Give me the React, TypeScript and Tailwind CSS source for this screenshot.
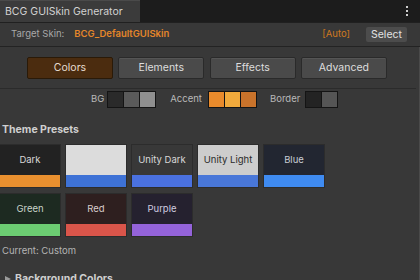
import { ReactNode } from 'react'

type Preset = { name: string; top: string; bar: string; text: string }

const presets: Preset[][] = [
  [
    { name: 'Dark', top: 'bg-[#222222]', bar: 'bg-[#e9902f]', text: 'text-[#d8d8d8]' },
    { name: '', top: 'bg-[#dcdcdc]', bar: 'bg-[#3e72d6]', text: 'text-[#222]' },
    { name: 'Unity Dark', top: 'bg-[#383838]', bar: 'bg-[#4a71e0]', text: 'text-[#d8d8d8]' },
    { name: 'Unity Light', top: 'bg-[#cdcdcd]', bar: 'bg-[#4977d8]', text: 'text-[#2a2a2a]' },
    { name: 'Blue', top: 'bg-[#222631]', bar: 'bg-[#3f8bf1]', text: 'text-[#c8ccd4]' },
  ],
  [
    { name: 'Green', top: 'bg-[#1d2a21]', bar: 'bg-[#6ccc72]', text: 'text-[#c8d2c8]' },
    { name: 'Red', top: 'bg-[#2e1f1f]', bar: 'bg-[#da554a]', text: 'text-[#d8cccc]' },
    { name: 'Purple', top: 'bg-[#25212f]', bar: 'bg-[#9463da]', text: 'text-[#d0cce0]' },
  ],
]

function Swatches({ colors }: { colors: string[] }) {
  return (
    <div className="flex h-[17px] border border-[#141414] bg-[#141414] gap-px">
      {colors.map((c, i) => (
        <div key={i} className={`w-[15px] h-full ${c}`} />
      ))}
    </div>
  )
}

function TabButton({ active, children }: { active?: boolean; children: ReactNode }) {
  return (
    <div
      className={`w-[86px] h-[22px] flex items-center justify-center rounded-[2px] text-[10.5px] border ${
        active
          ? 'bg-[#4b2c0f] border-[#2a1a08] text-[#e6dccf]'
          : 'bg-[#4a4a4a] border-[#2a2a2a] text-[#dedede] shadow-[inset_0_1px_0_#555]'
      }`}
    >
      {children}
    </div>
  )
}

function PresetCard({ p }: { p: Preset }) {
  return (
    <div className="w-[60px] flex flex-col shadow-[0_0_0_1px_#2c2c2c]">
      <div className={`h-[30px] flex items-center justify-center text-[9.5px] ${p.top} ${p.text}`}>{p.name}</div>
      <div className={`h-[12px] ${p.bar}`} />
    </div>
  )
}

export default function App() {
  return (
    <div
      className="w-[420px] h-[280px] overflow-hidden bg-[#383838] flex flex-col"
      style={{ fontFamily: 'Inter, "Liberation Sans", sans-serif' }}
    >
      {/* Title bar */}
      <div className="h-[23px] shrink-0 flex bg-[#1c1c1c] border-b border-[#202020]">
        <div className="w-[140px] bg-[#3b3b3b] flex items-center pl-[5px] text-[10.5px] text-[#d2d2d2] border-t border-[#4a4a4a]">
          BCG GUISkin Generator
        </div>
        <div className="flex-1" />
        <div className="w-[10px] flex flex-col items-center justify-center gap-[2px] mr-[8px]">
          <div className="w-[2px] h-[2px] bg-[#cfcfcf]" />
          <div className="w-[2px] h-[2px] bg-[#cfcfcf]" />
          <div className="w-[2px] h-[2px] bg-[#cfcfcf]" />
        </div>
      </div>

      {/* Target skin row */}
      <div className="h-[24px] shrink-0 flex items-center pl-[11px] pr-[13px] border-b border-[#232323] text-[9.5px]">
        <span className="text-[#a8a8a8]">Target Skin:</span>
        <span className="ml-[10px] text-[#e4862a] font-semibold">BCG_DefaultGUISkin</span>
        <span className="ml-auto text-[#d0781f]">[Auto]</span>
        <div className="ml-[16px] h-[15px] w-[41px] bg-[#4c4c4c] rounded-[2px] flex items-center justify-center text-[10.5px] text-[#e2e2e2]">
          Select
        </div>
      </div>

      <div className="flex-1 min-h-0 flex flex-col border-r border-[#4a4a4a]">
        {/* Tabs */}
        <div className="shrink-0 flex gap-[5.3px] pl-[27px] pt-[10px]">
          <TabButton active>Colors</TabButton>
          <TabButton>Elements</TabButton>
          <TabButton>Effects</TabButton>
          <TabButton>Advanced</TabButton>
        </div>

        <div className="shrink-0 mt-[9px] border-t border-[#2b2b2b] mr-[3px]" />

        {/* Color swatches */}
        <div className="shrink-0 flex items-center h-[17px] mt-[2px] pl-[91px] text-[9.5px] text-[#b8b8b8]">
          <span>BG</span>
          <div className="ml-[3px]">
            <Swatches colors={['bg-[#2a2a2a]', 'bg-[#5a5a5a]', 'bg-[#8f8f8f]']} />
          </div>
          <span className="ml-[14px]">Accent</span>
          <div className="ml-[6px]">
            <Swatches colors={['bg-[#e98b2c]', 'bg-[#f1aa3c]', 'bg-[#c9732b]']} />
          </div>
          <span className="ml-[13px]">Border</span>
          <div className="ml-[5px]">
            <Swatches colors={['bg-[#232323]', 'bg-[#555555]']} />
          </div>
        </div>

        {/* Theme presets */}
        <div className="shrink-0 mt-[15px] pl-[2px] text-[10.5px] font-bold text-[#cfcfcf] leading-[14px]">Theme Presets</div>

        <div className="shrink-0 mt-[8px] flex flex-col gap-[7px]">
          {presets.map((row, i) => (
            <div key={i} className="flex gap-[6px]">
              {row.map((p, j) => (
                <PresetCard key={j} p={p} />
              ))}
            </div>
          ))}
        </div>

        <div className="shrink-0 mt-[8px] pl-[2px] text-[9.5px] text-[#b4b4b4] leading-[14px]">Current: Custom</div>

        <div className="shrink-0 mt-[14px] pl-[4px] flex items-center gap-[3px] text-[10.5px] font-bold text-[#cfcfcf] leading-[14px]">
          <svg width="8" height="8" viewBox="0 0 8 8">
            <path d="M1 1 L7 4 L1 7 Z" fill="#9a9a9a" />
          </svg>
          <span>Background Colors</span>
        </div>
      </div>
    </div>
  )
}
